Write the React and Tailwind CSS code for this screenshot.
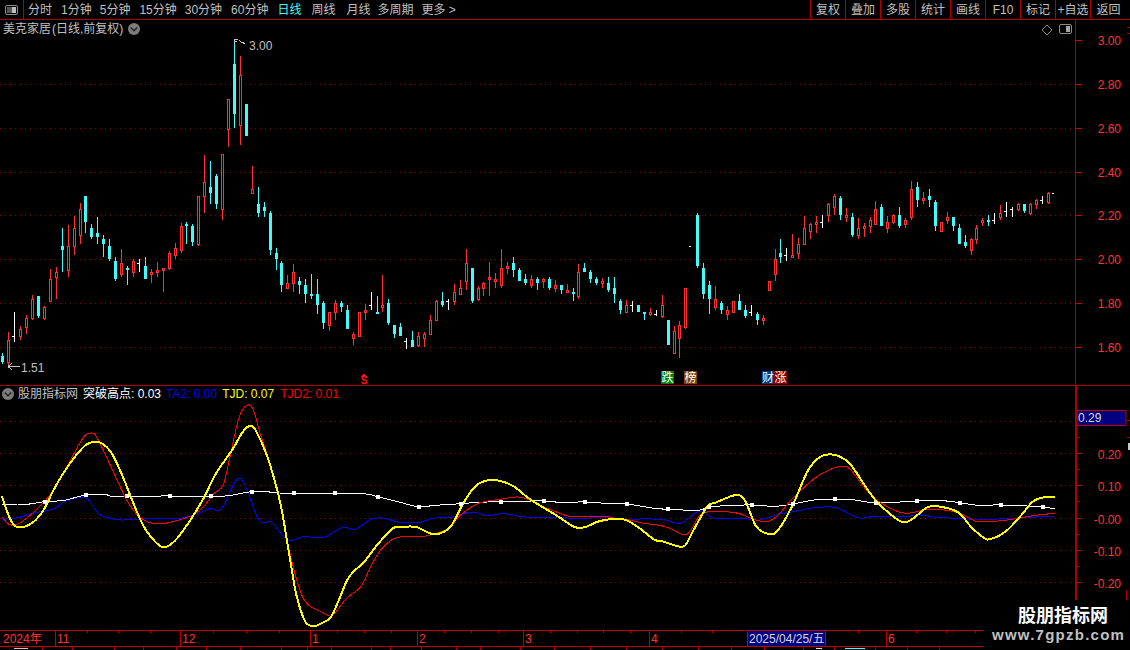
import React from "react";

const C = "#40fcfc", R = "#ff3232", W = "#ffffff", GRID = "#8a0000";

const K = `c 353 356 362 364|r 332 340 363 365|w 312 336 336 342|r 326 329 337 340|r 315 318 328 334|r 295 299 319 320|c 296 296 316 318|r 306 307 319 320|r 269 279 302 302|r 267 272 278 299|c 228 246 250 272|r 225 246 271 277|r 216 228 247 255|r 203 209 236 244|c 196 196 222 233|c 224 228 237 239|c 217 233 237 244|c 235 239 244 257|c 239 246 259 261|c 257 261 279 281|r 249 263 275 277|c 266 268 270 285|r 259 261 273 277|w 259 263 263 272|c 257 266 279 279|r 269 272 275 283|r 262 270 273 277|r 268 268 271 292|r 251 253 269 270|r 243 248 256 259|r 223 226 251 253|c 222 224 226 244|c 224 226 242 246|r 196 196 245 246|r 155 182 197 213|c 161 187 193 204|c 174 176 204 209|r 154 154 210 220|r 99 99 130 147|c 43 64 114 128|r 56 75 126 145|c 104 104 136 136|r 166 189 194 194|c 187 204 213 217|c 202 207 211 217|c 211 213 250 255|c 248 253 259 270|c 261 263 285 292|r 275 283 289 289|r 264 272 284 292|c 277 281 285 294|c 279 285 294 303|c 274 294 296 299|c 279 294 305 314|c 301 303 323 329|r 312 312 326 331|r 300 303 313 320|c 301 303 307 312|c 305 310 329 329|r 332 334 339 345|r 312 312 337 337|r 304 310 313 320|w 292 305 305 310|c 296 312 314 314|r 275 305 308 312|c 299 303 323 325|c 325 325 334 338|c 323 327 336 336|w 338 341 341 349|c 331 340 347 347|r 332 336 346 347|r 332 334 339 347|r 315 320 335 335|r 300 301 321 321|c 292 301 305 307|w 299 301 301 310|r 284 292 302 305|r 280 288 295 295|r 249 263 282 290|c 268 268 301 303|r 286 288 300 301|r 282 283 289 296|r 262 277 280 296|r 273 279 282 288|r 249 268 286 288|r 262 266 269 274|c 257 263 270 277|c 268 270 281 281|c 274 279 283 285|r 275 279 286 288|c 277 279 283 290|r 278 279 282 288|c 277 279 288 290|r 280 285 289 292|c 285 285 290 294|r 284 290 293 293|c 288 292 294 301|r 264 272 297 299|c 263 268 272 272|c 270 272 279 283|c 277 279 283 285|r 278 281 284 288|c 277 283 290 292|c 277 288 294 303|c 299 301 310 314|r 300 305 313 313|w 301 305 305 312|c 305 305 312 312|c 312 312 314 320|r 308 312 315 316|w 310 314 314 316|r 295 305 317 318|c 320 320 345 345|r 326 331 354 354|r 321 325 339 358|r 288 288 328 329|w 246 246 246 246|c 213 215 266 268|c 263 268 294 299|c 281 285 299 314|r 286 299 308 310|c 301 303 310 314|r 306 310 315 320|r 301 301 313 313|c 294 301 310 310|c 305 310 316 318|w 305 312 312 316|c 312 314 320 325|r 315 318 321 325|r 281 281 291 291|r 249 259 275 281|c 239 253 257 263|w 248 255 255 261|r 234 255 258 258|r 238 244 254 259|r 216 228 245 245|r 223 224 232 239|r 216 222 225 233|w 215 222 222 228|r 203 204 216 222|r 194 196 208 215|c 196 198 215 220|r 208 215 218 222|c 213 217 235 237|r 218 228 236 239|r 223 226 229 237|r 217 220 227 233|r 201 209 225 225|c 204 207 226 226|r 216 222 229 233|r 214 215 223 224|c 207 215 226 228|r 218 220 225 228|r 181 189 218 220|c 182 187 200 207|r 192 198 201 204|c 189 196 200 207|c 200 202 226 231|r 222 222 232 232|r 212 217 221 224|c 217 217 226 231|c 224 228 244 244|c 235 242 246 248|r 238 239 251 255|r 225 228 240 244|r 218 220 223 226|c 215 220 222 226|w 213 220 220 224|r 205 213 218 220|w 202 211 211 217|w 207 209 209 217|r 203 204 210 211|c 204 204 211 213|r 203 204 214 215|r 199 200 205 209|w 196 200 200 204|r 192 193 203 204|w 193 193 193 193`
  .split("|")
  .map((s) => {
    const [t, h, a, b, l] = s.split(" ");
    return { t, h: +h, a: +a, b: +b, l: +l };
  });

function Candle({ k, i }) {
  const x = Math.round(2.3 + 5.94 * i);
  if (k.t === "w") {
    return (
      <g fill={W}>
        {k.l > k.h && <rect x={x} y={k.h} width="1" height={k.l - k.h} />}
        <rect x={x - 2} y={k.a} width="2" height="1" />
      </g>
    );
  }
  if (k.t === "c") {
    return (
      <g fill={C}>
        <rect x={x} y={k.h} width="1" height={k.l - k.h} />
        <rect x={x - 1} y={k.a} width="3" height={k.b - k.a} />
      </g>
    );
  }
  return (
    <g>
      <rect x={x} y={k.h} width="1" height={Math.max(0, k.a - k.h)} fill={R} />
      <rect x={x} y={k.b} width="1" height={Math.max(0, k.l - k.b)} fill={R} />
      <rect x={x - 0.5} y={k.a + 0.5} width="2" height={Math.max(1, k.b - k.a - 1)} fill="#000" stroke={R} strokeWidth="1" />
    </g>
  );
}

const mapA = (a) => a.map(([x, y]) => [x / 2.8, 395 + y / 3]);
const mapB = (a) => a.map(([x, y]) => [560 + x / 2.75, 395 + y / 3]);
const spline = (p) => {
  let d = `M${p[0][0].toFixed(1)} ${p[0][1].toFixed(1)}`;
  for (let i = 0; i < p.length - 1; i++) {
    const p0 = p[i - 1] || p[i], p1 = p[i], p2 = p[i + 1], p3 = p[i + 2] || p2;
    const c1 = [p1[0] + (p2[0] - p0[0]) / 6, p1[1] + (p2[1] - p0[1]) / 6];
    const c2 = [p2[0] - (p3[0] - p1[0]) / 6, p2[1] - (p3[1] - p1[1]) / 6];
    d += `C${c1[0].toFixed(1)} ${c1[1].toFixed(1)} ${c2[0].toFixed(1)} ${c2[1].toFixed(1)} ${p2[0].toFixed(1)} ${p2[1].toFixed(1)}`;
  }
  return d;
};

const white = [...mapA([[5,328],[50,330],[90,326],[125,320],[180,316],[240,300],[295,298],[320,304],[475,303],[590,305],[640,302],[705,290],[750,290],[780,294],[1000,295],[1060,306],[1120,322],[1172,335],[1220,331],[1290,326],[1340,322],[1404,320],[1520,318]]),
  ...mapB([[0,322],[70,321],[125,325],[183,327],[260,340],[300,343],[380,346],[410,336],[460,332],[527,330],[590,334],[640,327],[700,315],[755,312],[810,315],[870,324],[983,318],[1050,317],[1100,323],[1150,331],[1212,330],[1327,336],[1360,342]])];
const yellow = [...mapA([[5,303],[15,335],[30,375],[42,393],[60,397],[80,390],[100,375],[125,340],[150,285],[180,230],[210,185],[240,150],[265,140],[285,145],[310,170],[340,235],[370,315],[400,390],[430,435],[458,457],[490,437],[530,380],[570,310],[605,235],[650,165],[680,110],[700,93],[715,105],[745,175],[770,260],[790,350],[810,480],[830,600],[855,680],[880,693],[900,685],[930,660],[970,560],[990,530],[1020,500],[1060,445],[1100,400],[1125,396],[1165,396],[1210,417],[1240,412],[1265,390],[1300,320],[1335,270],[1380,255],[1435,272],[1480,310],[1530,343]]),
  ...mapB([[0,368],[40,396],[70,396],[110,378],[170,372],[210,393],[260,434],[285,440],[325,454],[345,450],[370,400],[405,335],[430,322],[485,300],[510,320],[540,395],[575,417],[600,405],[640,330],[680,230],[710,190],[740,178],[770,185],[800,210],[850,290],[880,330],[935,378],[965,375],[1010,337],[1045,335],[1095,352],[1130,395],[1165,428],[1185,432],[1225,410],[1265,365],[1300,320],[1330,307],[1362,305]])];
const red = [...mapA([[5,365],[25,388],[50,387],[80,365],[120,325],[150,285],[185,220],[210,170],[235,125],[255,114],[270,125],[300,190],[330,260],[360,325],[390,365],[420,383],[460,385],[500,375],[540,360],[570,335],[600,295],[625,270],[645,180],[670,65],[690,32],[708,42],[730,120],[760,220],[785,330],[815,490],[845,600],[870,635],[900,650],[930,662],[970,610],[1010,575],[1040,510],[1070,460],[1110,428],[1180,425],[1215,417],[1255,400],[1290,360],[1340,325],[1400,313],[1445,306],[1470,310],[1510,330]]),
  ...mapB([[0,355],[35,365],[125,365],[150,370],[190,375],[230,385],[290,395],[340,419],[360,405],[385,360],[410,350],[450,350],[490,355],[540,375],[570,380],[600,360],[640,310],[700,250],[740,225],[775,214],[800,225],[850,295],[900,335],[950,355],[1000,345],[1050,344],[1100,355],[1150,380],[1230,375],[1300,362],[1360,355]])];
const blue = [...mapA([[5,372],[50,368],[90,355],[150,342],[180,320],[220,307],[245,312],[275,355],[300,368],[340,375],[390,372],[430,370],[500,370],[550,358],[590,340],[620,342],[672,250],[725,375],[760,382],[805,435],[850,425],[905,427],[960,397],[995,403],[1040,372],[1075,370],[1120,382],[1175,382],[1210,370],[1265,367],[1310,353],[1345,355],[1360,363],[1410,356],[1470,366]]),
  ...mapB([[0,368],[50,370],[120,368],[170,372],[280,373],[330,385],[375,352],[395,352],[425,370],[500,370],[550,375],[600,358],[640,350],[700,338],[760,338],[820,368],[860,365],[920,365],[1000,362],[1040,368],[1100,370],[1140,375],[1240,370],[1360,363]])];
const squares = [...mapA([[125,320],[240,300],[356,303],[475,303],[590,303],[705,291],[822,294],[938,294],[1057,306],[1172,336],[1290,327],[1404,320],[1522,318]]),
  ...mapB([[70,321],[183,327],[298,342],[410,336],[527,330],[640,327],[755,312],[870,324],[983,318],[1100,323],[1212,330],[1327,336]])];

const Chevron = ({ cls }) => (
  <svg viewBox="0 0 12 12" className={cls}>
    <circle cx="6" cy="6" r="6" fill="#7c7c7c" />
    <path d="M2.8 4.6 6 7.8 9.2 4.6" fill="none" stroke="#222" strokeWidth="1.4" />
  </svg>
);

const SplitIcon = ({ left }) => (
  <svg viewBox="0 0 13 10" className="w-[13px] h-[10px] block">
    <rect x="0.5" y="0.5" width="12" height="9" rx="1.5" fill="#000" stroke="#8c8c8c" />
    {left ? <rect x="2" y="2" width="5" height="6" fill="#555" /> : <rect x="7" y="2" width="4" height="6" fill="#a8a8a8" />}
    {left && <rect x="7" y="2" width="4" height="6" fill="#bdbdbd" />}
  </svg>
);

const periods = [
  ["分时", "ml-[4px]"], ["1分钟", "ml-[9px]"], ["5分钟", "ml-[8px]"], ["15分钟", "ml-[9px]"], ["30分钟", "ml-[8px]"], ["60分钟", "ml-[9px]"],
  ["日线", "ml-[9px] text-[#40fcfc]"], ["周线", "ml-[10px]"], ["月线", "ml-[11px]"], ["多周期", "ml-[7px]"], ["更多 >", "ml-[8px]"],
];
const tools = ["复权", "叠加", "多股", "统计", "画线", "F10", "标记", "+自选"];
const priceTicks = [[40, "3.00"], [84, "2.80"], [128, "2.60"], [172, "2.40"], [215, "2.20"], [259, "2.00"], [303, "1.80"], [347, "1.60"]];
const indTicks = [[453.5, "0.20"], [485.5, "0.10"], [518.5, "-0.00"], [550.5, "-0.10"], [582.5, "-0.20"]];
const dateTicks = [87, 118, 150, 213, 246, 279, 337, 364, 391, 444, 471, 498, 550, 577, 603, 630, 681, 712, 858, 916, 946, 975];
const dateMarks = [["2024年", 3], ["11", 57], ["12", 182], ["1", 312], ["2", 419], ["3", 525], ["4", 651], ["6", 888]];
const statusCells = [43, 30, 42, 29, 33, 30, 34, 41, 26, 24, 40, 19, 31, 35, 24, 40, 34, 36, 36, 36, 36, 33, 33, 39, 31, 41, 32, 32];

export default function App() {
  return (
    <div className="relative w-[1130px] h-[650px] bg-black overflow-hidden flex flex-col text-[12px] leading-none text-[#c0c0c0] font-['Liberation_Sans','Noto_Sans_CJK_SC',sans-serif]">
      {/* toolbar */}
      <div className="h-[20px] shrink-0 flex items-center border-b border-[#b00000]">
        <div className="w-[24px] h-full border-r border-[#b00000] flex items-center justify-center">
          <SplitIcon left />
        </div>
        {periods.map(([t, c]) => (
          <span key={t} className={`whitespace-nowrap ${c}`}>{t}</span>
        ))}
        <div className="ml-auto w-[320px] h-full flex">
          {tools.map((t) => (
            <div key={t} className="w-[35px] border-l border-[#b00000] flex items-center justify-center whitespace-nowrap">{t}</div>
          ))}
          <div className="flex-1 border-l border-[#b00000] flex items-center justify-center pr-[4px]">返回</div>
        </div>
      </div>

      {/* price panel */}
      <div className="h-[366px] shrink-0 flex border-b border-[#b00000]">
        <div className="relative w-[1075px] h-full">
          <svg viewBox="0 20 1075 365" className="absolute inset-0 w-full h-full block" shapeRendering="crispEdges">
            {priceTicks.slice(1).map(([y]) => (
              <line key={y} x1="0" x2="1075" y1={y + 0.5} y2={y + 0.5} stroke={GRID} strokeDasharray="1 4" />
            ))}
            {K.map((k, i) => <Candle key={i} k={k} i={i} />)}
            <g fill="none" stroke="#c8c8c8">
              <path d="M234.5 44V39.5H238M234.5 41.5H237M239 40.5L242 42.5L245 43.5" />
              <path d="M8 366.5H20M8 366.5L12 363.5M8 366.5L12 369.5" />
            </g>
            <text x="249" y="50" fill="#c0c0c0" fontSize="12" shapeRendering="auto">3.00</text>
            <text x="21" y="372" fill="#c0c0c0" fontSize="12" shapeRendering="auto">1.51</text>
            <path d="M364 373L367 377H361Z" fill="#ff1010" />
            <text x="364" y="384" fill="#ff1010" fontSize="10" fontWeight="bold" textAnchor="middle">S</text>
            <rect x="661" y="371" width="13" height="13" fill="#008000" />
            <text x="661.5" y="382" fill="#fff" fontSize="12">跌</text>
            <rect x="684" y="371" width="13" height="13" fill="#804000" />
            <text x="684.5" y="382" fill="#fff" fontSize="12">榜</text>
            <rect x="762" y="371" width="12" height="13" fill="#003878" />
            <text x="762" y="382" fill="#fff" fontSize="12">财</text>
            <rect x="774" y="371" width="13" height="13" fill="#800008" />
            <text x="774.5" y="382" fill="#fff" fontSize="12">涨</text>
            <path d="M1047 25L1052 30L1047 35L1042 30Z" fill="none" stroke="#8c8c8c" shapeRendering="auto" />
          </svg>
          <div className="absolute left-[3px] top-[3px] flex items-center h-[12px]">
            <span className="whitespace-nowrap">美克家居</span>
            <span className="whitespace-nowrap ml-[1px]">(日线,前复权)</span>
            <Chevron cls="w-[12px] h-[12px] block ml-[5px]" />
          </div>
          <div className="absolute right-[3px] top-[4px]"><SplitIcon /></div>
        </div>
        <svg viewBox="1076 20 54 365" className="w-[55px] h-full block border-l border-[#b00000]" preserveAspectRatio="none">
          {priceTicks.map(([y, t]) => (
            <g key={t}>
              <rect x="1076" y={y} width="5" height="1" fill="#d00000" />
              <text x="1121" y={y + 5} textAnchor="end" fill={R} fontSize="12">{t}</text>
            </g>
          ))}
          <rect x="1127" y="27" width="3" height="1" fill="#b00000" />
          <rect x="1127" y="33" width="3" height="1" fill="#b00000" />
        </svg>
      </div>

      {/* indicator panel */}
      <div className="h-[244px] shrink-0 flex">
        <div className="relative w-[1075px] h-full">
          <svg viewBox="0 386 1075 244" className="absolute inset-0 w-full h-full block" shapeRendering="crispEdges">
            {[421.5, 453.5, 485.5, 518.5, 550.5, 582.5].map((y) => (
              <line key={y} x1="0" x2="1075" y1={y} y2={y} stroke={GRID} strokeDasharray="1 4" />
            ))}
            <path d={spline(blue)} fill="none" stroke="#0000ff" strokeWidth="1" />
            <path d={spline(white)} fill="none" stroke="#fff" strokeWidth="1" />
            <path d={spline(red)} fill="none" stroke="#ff0000" strokeWidth="1" />
            <path d={spline(yellow)} fill="none" stroke="#ffff00" strokeWidth="2" />
            {squares.map(([x, y], i) => (
              <rect key={i} x={Math.round(x) - 2} y={Math.round(y) - 2} width="4" height="4" fill="#fff" />
            ))}
          </svg>
          <div className="absolute left-[2px] top-[2px] flex items-center h-[12px] whitespace-nowrap">
            <Chevron cls="w-[12px] h-[12px] block" />
            <span className="ml-[4px]">股朋指标网</span>
            <span className="ml-[5px] text-white">突破高点: 0.03</span>
            <span className="ml-[5px] text-[#0000ff]">TA2: 0.00</span>
            <span className="ml-[5px] text-[#ffff00]">TJD: 0.07</span>
            <span className="ml-[6px] text-[#ff0000]">TJD2: 0.01</span>
          </div>
        </div>
        <svg viewBox="1077 386 53 244" className="w-[55px] h-full block border-l-2 border-[#b00000]" preserveAspectRatio="none">
          {[437, 469, 501, 534, 566].map((y) => <rect key={y} x="1077" y={y} width="3" height="1" fill="#b00000" />)}
          {[421].concat(indTicks.map((t) => Math.floor(t[0]))).map((y) => <rect key={y} x="1077" y={y} width="5" height="1" fill="#b00000" />)}
          {indTicks.map(([y, t]) => (
            <text key={t} x="1121" y={y + 5} textAnchor="end" fill={R} fontSize="12">{t}</text>
          ))}
          <rect x="1077" y="410.5" width="49" height="15" fill="#000080" stroke="#c00000" />
          <text x="1078" y="422" fill="#d8d8d8" fontSize="12">0.29</text>
          <rect x="1126" y="590" width="1" height="10" fill="#c00000" />
          <rect x="1127" y="420" width="3" height="1" fill="#b00000" />
          <rect x="1127" y="437" width="3" height="1" fill="#b00000" />
          <rect x="1128" y="443" width="2" height="7" fill="#c8c8c8" />
        </svg>
      </div>

      {/* time axis */}
      <div className="h-[17px] shrink-0 border-y border-[#c00000]">
        <svg viewBox="0 631 1130 15" className="w-full h-full block">
          {dateTicks.map((x) => <rect key={x} x={x} y="631" width="1" height="2" fill="#c00000" />)}
          {[55, 180, 310, 417, 523, 649, 886].map((x) => <rect key={x} x={x} y="631" width="1" height="15" fill="#c00000" />)}
          {dateMarks.map(([t, x]) => (
            <text key={t} x={x} y="643" fill={R} fontSize="12">{t}</text>
          ))}
          <rect x="747.5" y="630.5" width="78" height="16" fill="#000080" stroke="#c00000" />
          <text x="749" y="643" fill="#d8d8d8" fontSize="12">2025/04/25/五</text>
        </svg>
      </div>

      {/* clipped status row */}
      <div className="h-[3px] shrink-0 flex overflow-hidden">
        {statusCells.map((w, i) => (
          <div key={i} className="h-full border-r border-[#b00000] shrink-0 flex justify-center gap-[3px] pt-[1px]" style={{ width: w }}>
            {i === 0 && <span className="w-[14px] h-[1px] bg-[#c8c8c8]" />}
            {i === 24 && <span className="w-[6px] h-[1px] bg-[#e0e0e0]" />}
            {i === 25 && <span className="w-[20px] h-[1px] bg-[#40fcfc]" />}
          </div>
        ))}
      </div>

      {/* watermark */}
      <div className="absolute left-[984px] top-[600px] w-[146px] h-[50px] bg-black flex flex-col items-start">
        <span className="ml-[34px] text-white font-bold text-[18px] leading-[18px] mt-[5px] whitespace-nowrap font-['Noto_Sans_CJK_SC',sans-serif]">股朋指标网</span>
        <span className="ml-[8px] text-[#c0c0c0] font-bold text-[15px] leading-[15px] mt-[4px] tracking-[1.25px] whitespace-nowrap">www.7gpzb.com</span>
      </div>
    </div>
  );
}
